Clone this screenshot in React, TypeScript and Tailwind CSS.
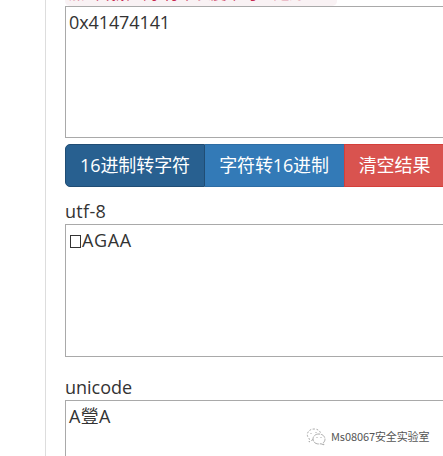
import React from "react";

function Output({ label, children, height }: { label: React.ReactNode; children: React.ReactNode; height: string }) {
  return (
    <div className="flex shrink-0 flex-col">
      <div className="h-[26px] whitespace-nowrap leading-[26px]">{label}</div>
      <div className={`border border-[#a9a9a9] bg-white pl-[3px] pt-[2px] leading-[26px] ${height}`}>{children}</div>
    </div>
  );
}

export default function App() {
  return (
    <div className="flex h-[456px] w-[443px] overflow-hidden bg-white font-['Open_Sans','Noto_Sans_CJK_SC',sans-serif] text-[18px] text-[#333]">
      <div className="w-[46px] shrink-0 border-r border-[#ddd]" />
      <main className="relative flex w-[420px] shrink-0 flex-col pl-[19px]">
        <div className="flex h-[6px] shrink-0 flex-col items-start justify-end">
          <code className="h-[24px] w-[272px] shrink-0 whitespace-nowrap rounded-[5px] bg-[#f9f2f4] pl-[4px] font-['Noto_Sans_CJK_SC',sans-serif] text-[15.75px] leading-[22px] text-[#c7254e]">
            加密或解密字符串长度不可以超过
          </code>
        </div>
        <div className="h-[132px] shrink-0 border border-[#a9a9a9] pl-[3px] pt-[2px] leading-[26px] tracking-[-0.1px]">0x41474141</div>
        <div className="mt-[6px] flex h-[43px] shrink-0 whitespace-nowrap text-white">
          <button className="w-[140px] shrink-0 rounded-l-[5px] border border-[#204d74] bg-[#286090] tracking-[-0.1px]">16进制转字符</button>
          <button className="w-[139px] shrink-0 border-y border-[#2e6da4] bg-[#337ab7] pr-px tracking-[-0.15px]">字符转16进制</button>
          <button className="w-[103px] shrink-0 border border-[#d43f3a] bg-[#d9534f] pr-[2px] tracking-[-0.1px]">清空结果</button>
        </div>
        <div className="mt-[11px] flex shrink-0 flex-col gap-[17px]">
          <Output label={<span className="tracking-[0.3px]">utf-8</span>} height="h-[133px]">
            <span className="ml-px mr-px inline-block h-[13px] w-[11px] border border-[#333] align-[-1px]" />
            <span className="tracking-[0.6px]">AGAA</span>
          </Output>
          <Output label="unicode" height="h-[133px]">
            <span className="tracking-[0.3px]">A䝁A</span>
          </Output>
        </div>
        <div className="absolute left-[260px] top-[427px] flex h-[20px] items-center gap-[5px] whitespace-nowrap font-['Noto_Sans_CJK_SC',sans-serif] text-[11px] text-[#555]">
          <svg width="20" height="18" viewBox="0 0 20 18" fill="none" stroke="#aaa" strokeWidth="1">
            <path d="M7 11.5 3 14l.5-3C-1 7 2 1 8 1c4 0 6 2 6.500 4" strokeDasharray="2 1.500" />
            <path d="M13 6c-8 0-8 10 0 10l2-.2 3 1-.6-2C21 11 18 6 13 6Z" strokeDasharray="5 1" />
            <path d="M11 9v1M15 9v1M5 5v1M10 4v1" />
          </svg>
          <span className="pb-[2px] tracking-[-0.1px]">Ms08067安全实验室</span>
        </div>
      </main>
    </div>
  );
}
